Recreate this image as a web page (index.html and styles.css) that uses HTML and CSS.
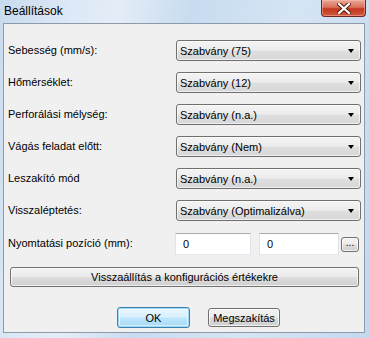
FILE: index.html
```html
<!DOCTYPE html>
<html>
<head>
<meta charset="utf-8">
<link rel="stylesheet" href="styles.css">
</head>
<body>
<div class="window">
  <div class="titlebar">
    <span class="title">Beállítások</span>
    <div class="close">
      <svg width="14" height="11" viewBox="0 0 14 11"><path d="M2 1 L12 10 M12 1 L2 10" stroke="#4a1a12" stroke-width="4" stroke-linecap="square"/><path d="M2 1 L12 10 M12 1 L2 10" stroke="#ffffff" stroke-width="2.2" stroke-linecap="square"/></svg>
    </div>
  </div>
  <div class="client">
    <div class="form">
      <label class="lbl">Sebesség (mm/s):</label>
      <div class="combo"><span>Szabvány (75)</span><i class="arrow"></i></div>
      <label class="lbl">Hőmérséklet:</label>
      <div class="combo"><span>Szabvány (12)</span><i class="arrow"></i></div>
      <label class="lbl">Perforálási mélység:</label>
      <div class="combo"><span>Szabvány (n.a.)</span><i class="arrow"></i></div>
      <label class="lbl">Vágás feladat előtt:</label>
      <div class="combo"><span>Szabvány (Nem)</span><i class="arrow"></i></div>
      <label class="lbl">Leszakító mód</label>
      <div class="combo"><span>Szabvány (n.a.)</span><i class="arrow"></i></div>
      <label class="lbl">Visszaléptetés:</label>
      <div class="combo"><span>Szabvány (Optimalizálva)</span><i class="arrow"></i></div>
      <label class="lbl">Nyomtatási pozíció (mm):</label>
      <div class="pos">
        <div class="input w1">0</div>
        <div class="input w2">0</div>
        <div class="btn ellipsis">...</div>
      </div>
      <div class="btn wide">Visszaállítás a konfigurációs értékekre</div>
    </div>
    <div class="actions">
      <div class="btn ok">OK</div>
      <div class="btn cancel">Megszakítás</div>
    </div>
  </div>
</div>
</body>
</html>
```
FILE: styles.css
```css
html, body {
  margin: 0;
  padding: 0;
}
body {
  width: 369px;
  height: 338px;
  overflow: hidden;
  font-family: "Liberation Sans", Arial, sans-serif;
  font-size: 11px;
  color: #000;
}
.window {
  width: 369px;
  height: 338px;
  box-sizing: border-box;
  padding: 0 4px 5px 3px;
  background: linear-gradient(100deg, #c9dbef 0%, #dde9f6 18%, #e4edf7 28%, #c8dbf0 45%, #d6e5f4 70%, #c5d8ee 100%);
  display: flex;
  flex-direction: column;
}
.titlebar {
  height: 23px;
  flex: none;
  display: flex;
  justify-content: space-between;
  align-items: flex-start;
}
.title {
  font-size: 12px;
  margin-top: 4px;
  margin-left: 1px;
  color: #000;
}
.close {
  width: 45px;
  height: 17px;
  margin-right: -1px;
  box-sizing: border-box;
  border: 1px solid #6b2a20;
  border-top: none;
  border-radius: 0 0 4px 4px;
  background: linear-gradient(#e9a796 0%, #d9715a 45%, #c3381f 55%, #d4583e 100%);
  box-shadow: inset 0 0 0 1px rgba(255, 200, 190, 0.45);
  display: flex;
  align-items: center;
  justify-content: center;
}
.close svg {
  display: block;
}
.client {
  flex: 1;
  background: #f0f0f0;
  border: 1px solid #8c9aab;
}
.form {
  display: grid;
  grid-template-columns: 168px 185px;
  row-gap: 11px;
  align-items: center;
  padding: 16px 0 0 4px;
}
.lbl {
  line-height: 13px;
}
.combo {
  height: 21px;
  box-sizing: border-box;
  border: 1px solid #707070;
  border-radius: 3px;
  background: linear-gradient(#f4f4f4 0%, #ececec 48%, #dfdfdf 52%, #d6d6d6 100%);
  box-shadow: inset 0 0 0 1px rgba(255, 255, 255, 0.6);
  display: flex;
  align-items: center;
  justify-content: space-between;
  padding: 0 6px 0 3px;
}
.arrow {
  width: 0;
  height: 0;
  border-left: 3.5px solid transparent;
  border-right: 3.5px solid transparent;
  border-top: 4px solid #000;
  margin-top: 1px;
}
.pos {
  display: flex;
  align-items: center;
  margin-left: -1px;
  margin-top: 1px;
}
.input {
  height: 22px;
  box-sizing: border-box;
  background: #fff;
  border: 1px solid #e2e3ea;
  border-top-color: #abadb3;
  border-bottom-color: #e3e9ef;
  padding-left: 7px;
  display: flex;
  align-items: center;
}
.w1 { width: 76px; margin-right: 8px; }
.w2 { width: 80px; margin-right: 2px; }
.btn {
  box-sizing: border-box;
  border: 1px solid #707070;
  border-radius: 3px;
  background: linear-gradient(#f2f2f2 0%, #ebebeb 48%, #dddddd 52%, #cfcfcf 100%);
  box-shadow: inset 0 0 0 1px rgba(255, 255, 255, 0.7);
  display: flex;
  align-items: center;
  justify-content: center;
}
.ellipsis {
  width: 18px;
  height: 15px;
  font-size: 10px;
  line-height: 1;
  padding-bottom: 3px;
  align-items: flex-end;
}
.wide {
  grid-column: 1 / -1;
  height: 20px;
  margin: 1px 2px 0 2px;
}
.actions {
  display: flex;
  align-items: center;
  gap: 18px;
  padding-left: 113px;
  margin-top: 20px;
}
.ok {
  width: 73px;
  height: 21px;
  border-color: #3c7fb1;
  background: linear-gradient(#eaf6fd 0%, #d9f0fc 48%, #bee6fd 52%, #a7d9f5 100%);
  box-shadow: inset 0 0 0 1px #9ed8f8, inset 0 0 0 2px rgba(255,255,255,0.5);
}
.cancel {
  width: 72px;
  height: 19px;
}
```
